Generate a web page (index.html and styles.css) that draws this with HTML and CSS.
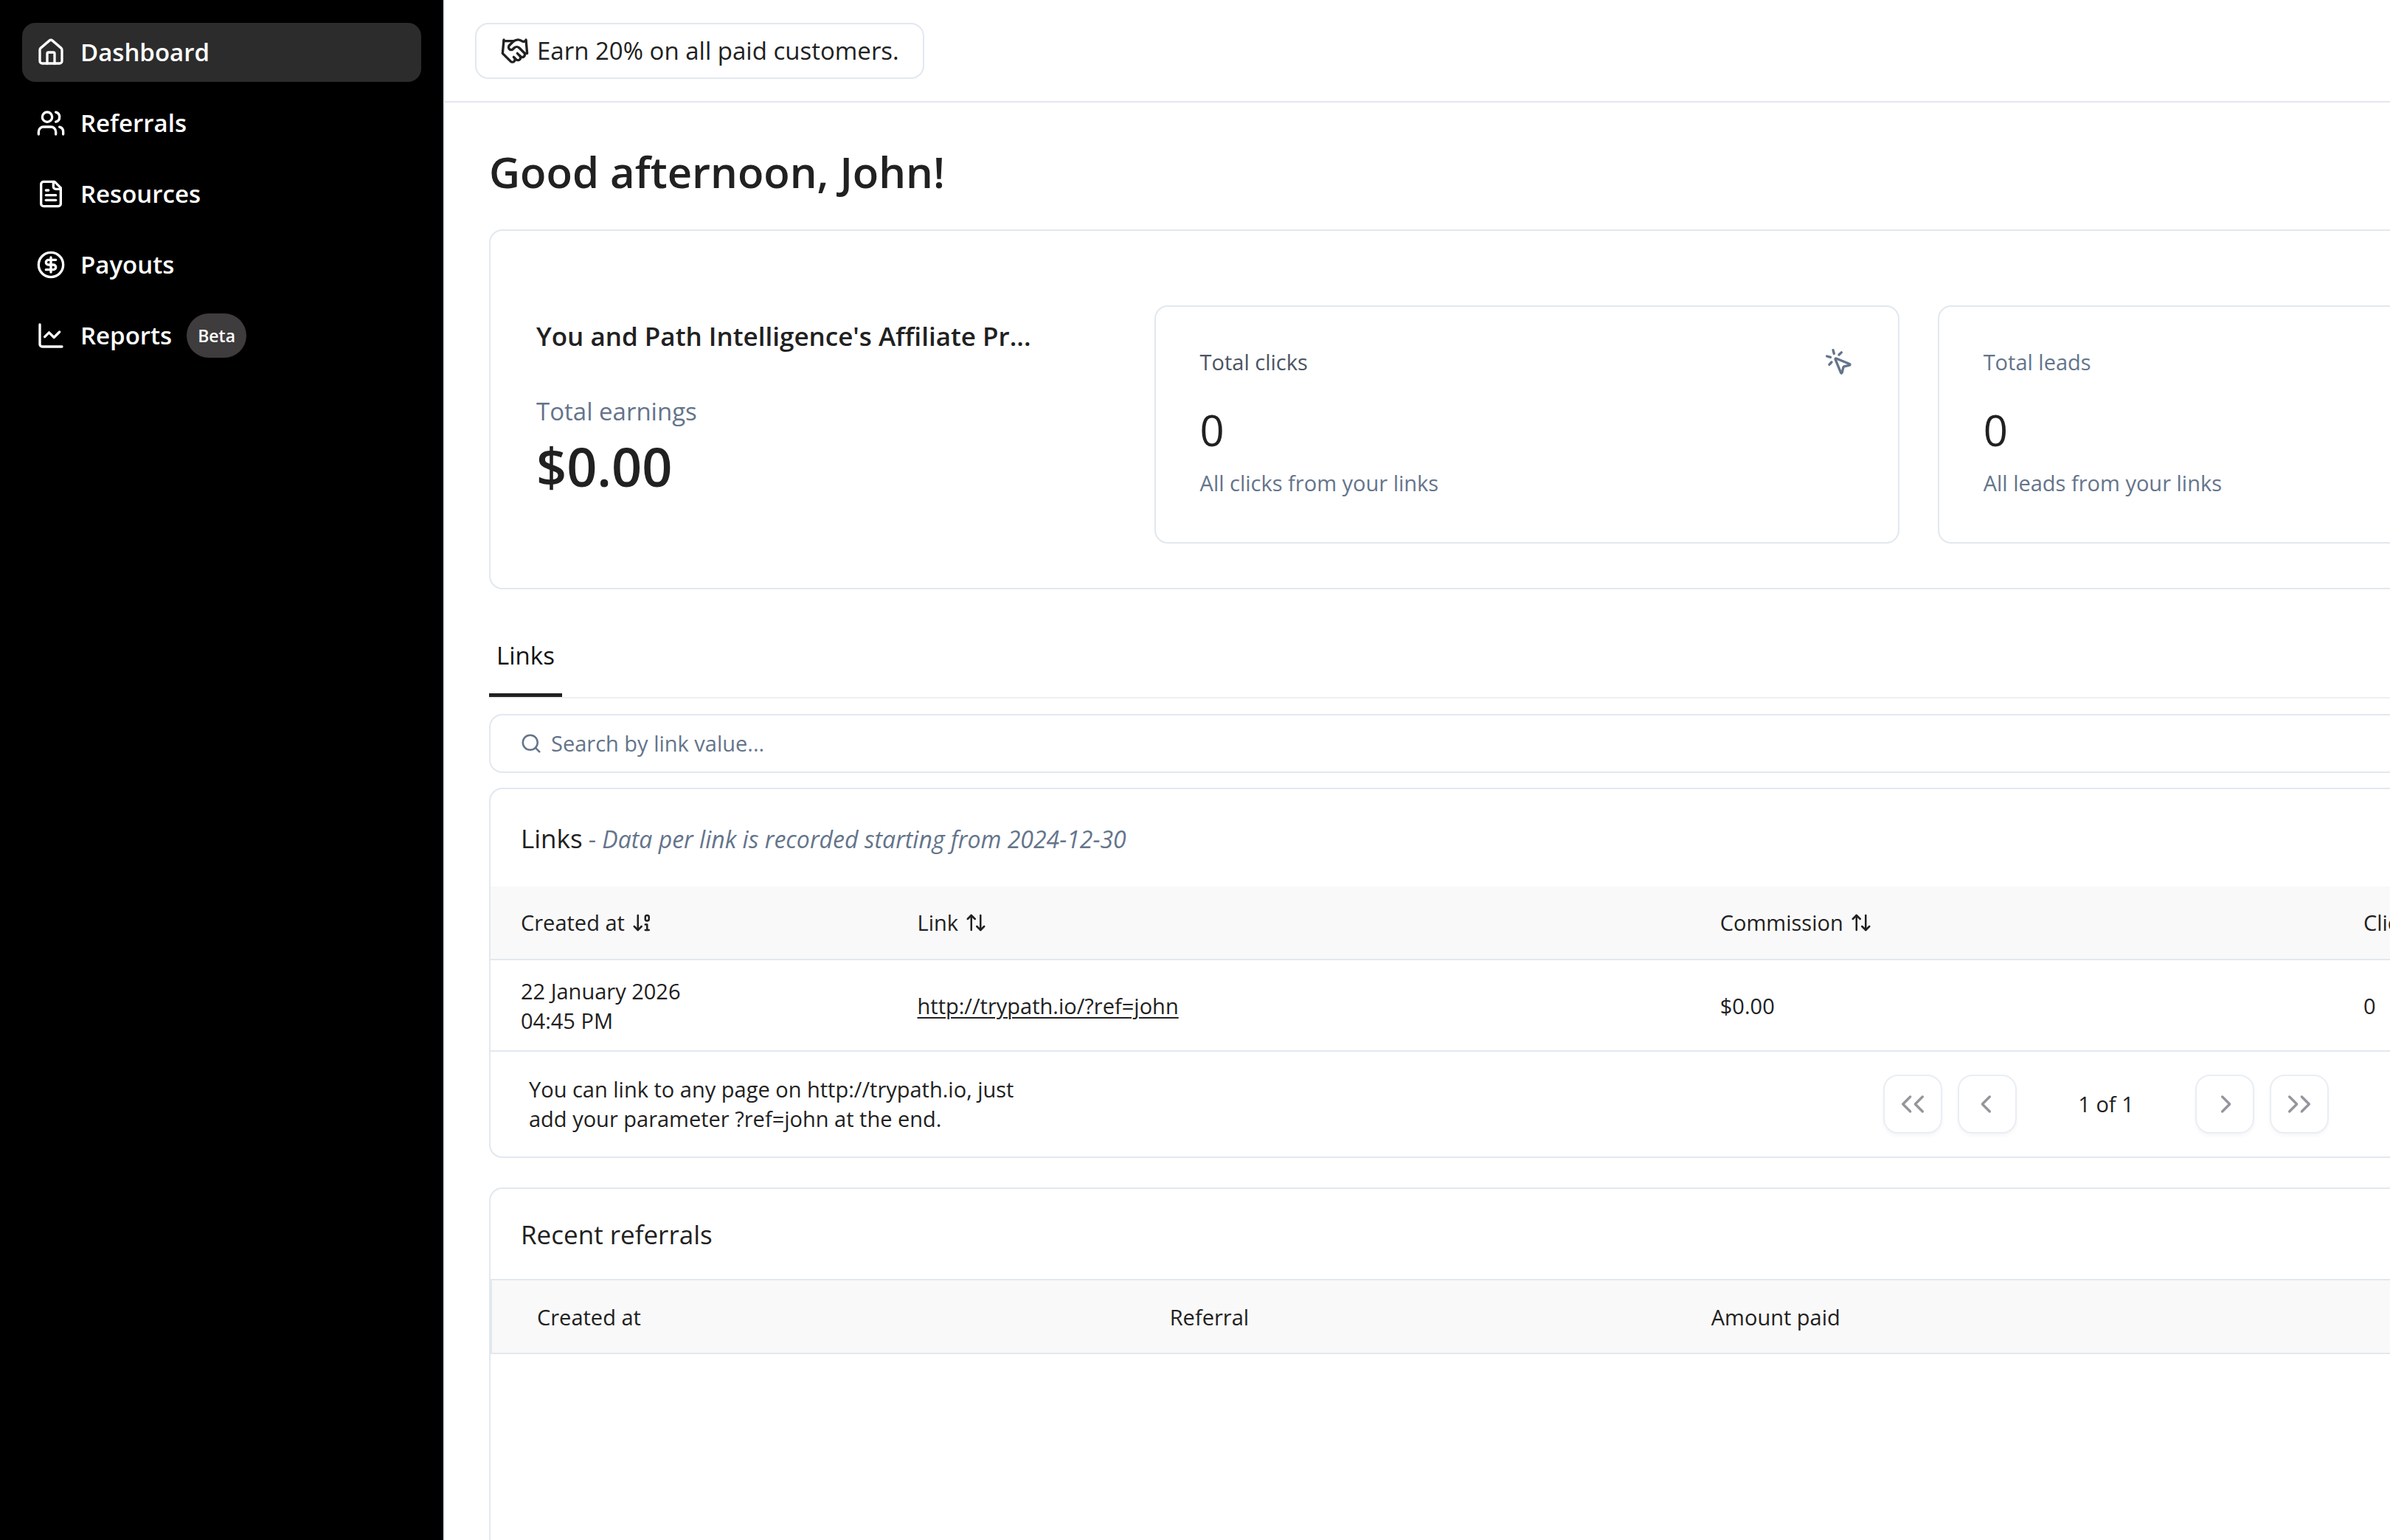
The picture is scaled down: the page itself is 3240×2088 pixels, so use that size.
FILE: index.html
```html
<!DOCTYPE html>
<html lang="en">
  <head>
    <title>Dashboard</title>
    <meta charset="utf-8">
    <meta name="viewport" content="width=device-width, initial-scale=1">
    <link rel="stylesheet" href="styles.css">
  </head>
  <body>
    <div class="app">

      <nav class="sidebar">
        <a class="nav-item active" href="#dashboard">
          <svg class="icon" viewBox="0 0 24 24"><path d="M15 21v-8a1 1 0 0 0-1-1h-4a1 1 0 0 0-1 1v8"/><path d="M3 10a2 2 0 0 1 .709-1.528l7-6a2 2 0 0 1 2.582 0l7 6A2 2 0 0 1 21 10v9a2 2 0 0 1-2 2H5a2 2 0 0 1-2-2z"/></svg>
          Dashboard
        </a>
        <a class="nav-item" href="#referrals">
          <svg class="icon" viewBox="0 0 24 24"><path d="M16 21v-2a4 4 0 0 0-4-4H6a4 4 0 0 0-4 4v2"/><circle cx="9" cy="7" r="4"/><path d="M22 21v-2a4 4 0 0 0-3-3.87"/><path d="M16 3.13a4 4 0 0 1 0 7.75"/></svg>
          Referrals
        </a>
        <a class="nav-item" href="#resources">
          <svg class="icon" viewBox="0 0 24 24"><path d="M15 2H6a2 2 0 0 0-2 2v16a2 2 0 0 0 2 2h12a2 2 0 0 0 2-2V7Z"/><path d="M14 2v4a2 2 0 0 0 2 2h4"/><path d="M10 9H8"/><path d="M16 13H8"/><path d="M16 17H8"/></svg>
          Resources
        </a>
        <a class="nav-item" href="#payouts">
          <svg class="icon" viewBox="0 0 24 24"><circle cx="12" cy="12" r="10"/><path d="M16 8h-6a2 2 0 1 0 0 4h4a2 2 0 1 1 0 4H8"/><path d="M12 18V6"/></svg>
          Payouts
        </a>
        <a class="nav-item" href="#reports">
          <svg class="icon" viewBox="0 0 24 24"><path d="M3 3v16a2 2 0 0 0 2 2h16"/><path d="m19 9-4.5 4.5-4-4L7 13"/></svg>
          Reports
          <span class="badge">Beta</span>
        </a>
      </nav>

      <main class="main">
        <header class="topbar">
          <div class="offer">
            <svg class="icon" viewBox="0 0 24 24"><path d="m11 17 2 2a1 1 0 1 0 3-3"/><path d="m14 14 2.5 2.5a1 1 0 1 0 3-3l-3.88-3.88a3 3 0 0 0-4.24 0l-.88.88a1 1 0 1 1-3-3l2.81-2.81a5.79 5.79 0 0 1 7.06-.87l.47.28a2 2 0 0 0 1.42.25L21 4"/><path d="m21 3 1 11h-2"/><path d="M3 3 2 14l6.5 6.5a1 1 0 1 0 3-3"/><path d="M3 4h8"/></svg>
            Earn 20% on all paid customers.
          </div>
        </header>

        <div class="content">
          <h1>Good afternoon, John!</h1>

          <section class="panel summary">
            <div class="earnings">
              <h2>You and Path Intelligence's Affiliate Pr...</h2>
              <div class="earnings-label">Total earnings</div>
              <div class="earnings-amount">$0.00</div>
            </div>
            <div class="stat">
              <div class="stat-head stat-head-dark">
                Total clicks
                <svg class="icon muted" viewBox="0 0 24 24"><path d="M14 4.1 12 6"/><path d="m5.1 8-2.9-.8"/><path d="m6 12-1.9 2"/><path d="M7.2 2.2 8 5.1"/><path d="M9.037 9.69a.498.498 0 0 1 .653-.653l11 4.5a.5.5 0 0 1-.074.949l-4.349 1.041a1 1 0 0 0-.74.739l-1.04 4.35a.5.5 0 0 1-.95.074z"/></svg>
              </div>
              <div class="stat-value">0</div>
              <div class="stat-note">All clicks from your links</div>
            </div>
            <div class="stat">
              <div class="stat-head">Total leads</div>
              <div class="stat-value">0</div>
              <div class="stat-note">All leads from your links</div>
            </div>
          </section>

          <div class="tabs" role="tablist">
            <button class="tab" role="tab" aria-selected="true">Links</button>
          </div>

          <div class="search">
            <svg class="icon-small muted" viewBox="0 0 24 24"><circle cx="11" cy="11" r="8"/><path d="m21 21-4.3-4.3"/></svg>
            <input type="text" placeholder="Search by link value..." aria-label="Search by link value">
          </div>

          <section class="panel links">
            <div class="panel-head links-head">
              <h2>Links</h2>
              <p>- <em>Data per link is recorded starting from 2024-12-30</em></p>
            </div>
            <table>
              <thead>
                <tr>
                  <th><button class="sort">Created at <svg class="icon-small" viewBox="0 0 24 24"><path d="m3 16 4 4 4-4"/><path d="M7 20V4"/><rect x="15" y="4" width="4" height="6" ry="2"/><path d="M17 20v-6h-2"/><path d="M15 20h4"/></svg></button></th>
                  <th><button class="sort">Link <svg class="icon-small" viewBox="0 0 24 24"><path d="m21 16-4 4-4-4"/><path d="M17 20V4"/><path d="m3 8 4-4 4 4"/><path d="M7 4v16"/></svg></button></th>
                  <th><button class="sort">Commission <svg class="icon-small" viewBox="0 0 24 24"><path d="m21 16-4 4-4-4"/><path d="M17 20V4"/><path d="m3 8 4-4 4 4"/><path d="M7 4v16"/></svg></button></th>
                  <th>Clicks</th>
                </tr>
              </thead>
              <tbody>
                <tr>
                  <td>22 January 2026<br>04:45 PM</td>
                  <td><a href="http://trypath.io/?ref=john">http://trypath.io/?ref=john</a></td>
                  <td>$0.00</td>
                  <td>0</td>
                </tr>
              </tbody>
            </table>
            <div class="links-foot">
              <p>You can link to any page on http://trypath.io, just add your parameter ?ref=john at the end.</p>
              <div class="pager">
                <button disabled aria-label="First page"><svg class="icon" viewBox="0 0 24 24"><path d="m10 18-6-6 6-6"/><path d="m20 18-6-6 6-6"/></svg></button>
                <button disabled aria-label="Previous page"><svg class="icon" viewBox="0 0 24 24"><path d="m14 18-6-6 6-6"/></svg></button>
                <span class="pager-count">1 of 1</span>
                <button disabled aria-label="Next page"><svg class="icon" viewBox="0 0 24 24"><path d="m10 18 6-6-6-6"/></svg></button>
                <button disabled aria-label="Last page"><svg class="icon" viewBox="0 0 24 24"><path d="m4 18 6-6-6-6"/><path d="m14 18 6-6-6-6"/></svg></button>
              </div>
            </div>
          </section>

          <section class="panel recent">
            <div class="panel-head">
              <h2>Recent referrals</h2>
            </div>
            <table>
              <thead>
                <tr>
                  <th>Created at</th>
                  <th>Referral</th>
                  <th>Amount paid</th>
                </tr>
              </thead>
            </table>
          </section>
        </div>
      </main>

    </div>
  </body>
</html>
```
FILE: styles.css
```css
:root {
  --text: #212121;
  --muted: #64748b;
  --line: #e2e8f0;
  --small: 29px;
  --medium: 33px;
  --large: 35px;
  --huge: 58px;
}

* {
  box-sizing: border-box;
}

body {
  background: #fff;
  color: var(--text);
  font-family: "Open Sans", "Noto Sans", sans-serif;
  font-size: var(--small);
  line-height: 40px;
  margin: 0;
}

h1, h2, p {
  font-weight: 400;
  margin: 0;
}

button, input {
  background: none;
  border: 0;
  color: inherit;
  font: inherit;
  padding: 0;
}

.icon, .icon-small {
  fill: none;
  flex-shrink: 0;
  height: 40px;
  stroke: currentColor;
  stroke-linecap: round;
  stroke-linejoin: round;
  stroke-width: 2;
  width: 40px;
}

.icon-small {
  height: 30px;
  width: 30px;
}

.muted {
  color: var(--muted);
}

.app {
  display: flex;
  height: 100vh;
  overflow: hidden;
}

/* Sidebar */

.sidebar {
  background: #000;
  border-right: 2px solid var(--line);
  display: flex;
  flex-direction: column;
  flex-shrink: 0;
  gap: 16px;
  padding: 31px 30px;
  width: 603px;
}

.nav-item {
  align-items: center;
  border-radius: 18px;
  color: #fff;
  display: flex;
  font-size: var(--medium);
  font-weight: 600;
  gap: 20px;
  height: 80px;
  padding: 0 19px;
  text-decoration: none;
}

.nav-item.active {
  background: #2c2c2c;
}

.badge {
  background: #3f3c3d;
  border-radius: 30px;
  font-size: 23px;
  line-height: 60px;
  padding: 0 15px;
}

/* Top bar */

.main {
  flex: 1;
  min-width: 0;
  overflow: hidden;
}

.topbar {
  border-bottom: 2px solid var(--line);
  display: flex;
  padding: 31px 41px 30px;
}

.offer {
  align-items: center;
  border: 2px solid var(--line);
  border-radius: 18px;
  display: flex;
  font-size: var(--medium);
  gap: 10px;
  height: 76px;
  padding: 0 32px;
}

/* The panels run on past the right edge of the window */
.content {
  margin-right: -62px;
  padding: 54px 0 0 60px;
}

h1 {
  font-size: var(--huge);
  font-weight: 600;
  line-height: 80px;
  margin-bottom: 38px;
}

h2 {
  font-size: var(--large);
  line-height: 48px;
}

.panel {
  border: 2px solid var(--line);
  border-radius: 18px;
  overflow: hidden;
}

/* Summary */

.summary {
  display: grid;
  gap: 52px;
  grid-template-columns: 7fr 9fr 6fr;
  padding: 101px 0 60px 62px;
}

.earnings {
  padding-top: 18px;
  white-space: nowrap;
}

.earnings h2 {
  font-weight: 600;
}

.earnings-label {
  color: var(--muted);
  font-size: var(--medium);
  line-height: 48px;
  margin: 54px 0 10px;
}

.earnings-amount {
  font-size: 72px;
  font-weight: 600;
  line-height: 80px;
}

.stat {
  border: 2px solid var(--line);
  border-radius: 18px;
  padding: 55px 60px 60px;
}

.stat-head {
  color: var(--muted);
  display: flex;
  justify-content: space-between;
}

.stat-head-dark {
  color: #4b5563;
}

.stat-value {
  font-size: var(--huge);
  line-height: 64px;
  margin: 40px 0 20px;
}

.stat-note {
  color: var(--muted);
}

/* Tabs and search */

.tabs {
  border-bottom: 2px solid #eeeff0;
  display: flex;
  margin-top: 66px;
}

.tab {
  border-bottom: 5px solid var(--text);
  color: #111;
  font-size: var(--medium);
  line-height: 48px;
  padding: 0 10px 27px;
}

.search {
  align-items: center;
  border: 2px solid var(--line);
  border-radius: 18px;
  display: flex;
  gap: 12px;
  height: 80px;
  margin: 21px 0 20px;
  padding: 0 40px;
}

.search input {
  flex: 1;
  outline: none;
}

.search input::placeholder {
  color: var(--muted);
  opacity: 1;
}

/* Tables */

.panel-head {
  padding: 38px 41px 36px;
}

.links-head {
  align-items: baseline;
  display: flex;
  gap: 8px;
  padding: 43px 41px 41px;
}

.links-head p {
  color: var(--muted);
  font-size: 32px;
}

table {
  border-collapse: separate;
  border-spacing: 0;
  table-layout: fixed;
  width: 100%;
}

th, td {
  border-bottom: 2px solid var(--line);
  font-weight: 400;
  padding: 22px 0 20px 41px;
  text-align: left;
  white-space: nowrap;
}

th {
  background: #f9f9f9;
  padding: 29px 0 29px 41px;
}

td a {
  color: inherit;
  text-decoration-thickness: 2px;
  text-underline-offset: 4px;
}

.links th:nth-child(1) { width: 20.4%; }
.links th:nth-child(2) { width: 41.3%; }
.links th:nth-child(3) { width: 33.1%; }

.recent th:nth-child(1) { width: 32.6%; }
.recent th:nth-child(2) { width: 27.9%; }

.sort {
  align-items: center;
  display: flex;
  gap: 9px;
}

.links-foot {
  align-items: center;
  display: flex;
  justify-content: space-between;
  padding: 31px 143px 31px 52px;
}

.links-foot p {
  max-width: 680px;
}

.pager {
  display: flex;
  gap: 21px;
}

.pager button {
  align-items: center;
  border: 2px solid #d5deea;
  border-radius: 20px;
  box-shadow: 0 3px 4px rgba(0, 0, 0, .06);
  color: #2b2f3c;
  display: flex;
  height: 80px;
  justify-content: center;
  opacity: .5;
  width: 80px;
}

.pager-count {
  line-height: 80px;
  text-align: center;
  width: 200px;
}

.recent {
  margin-top: 40px;
  min-height: 560px;
}

.recent table {
  border: 2px solid var(--line);
  border-bottom: 0;
}

.recent th {
  padding: 30px 0 28px 61px;
}
```
